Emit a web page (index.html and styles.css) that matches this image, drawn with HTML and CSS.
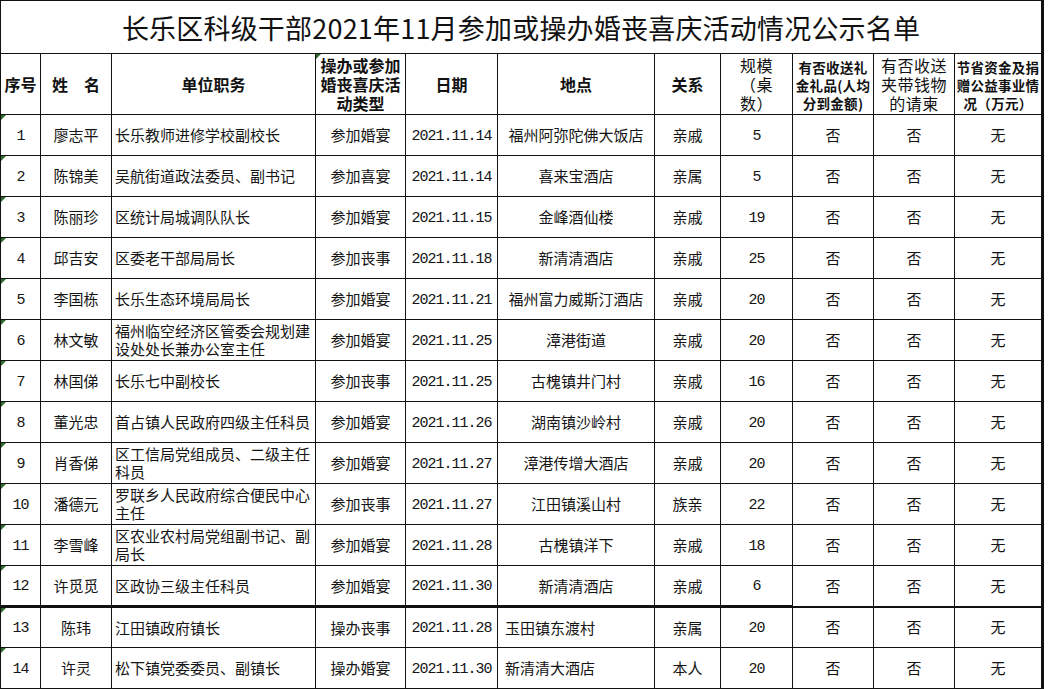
FILE: index.html
```html
<!DOCTYPE html>
<html lang="zh-CN">
<head>
<meta charset="utf-8">
<title>长乐区科级干部2021年11月参加或操办婚丧喜庆活动情况公示名单</title>
<link rel="stylesheet" href="styles.css">
</head>
<body>
<table class="sheet">
  <colgroup>
    <col class="c1"><col class="c2"><col class="c3"><col class="c4"><col class="c5"><col class="c6"><col class="c7"><col class="c8"><col class="c9"><col class="c10"><col class="c11">
  </colgroup>
  <tr class="title-row"><td colspan="11" class="title">长乐区科级干部2021年11月参加或操办婚丧喜庆活动情况公示名单</td></tr>
  <tr class="head-row">
    <th>序号</th>
    <th>姓　名</th>
    <th>单位职务</th>
    <th class="mark h3">操办或参加<br>婚丧喜庆活<br>动类型</th>
    <th>日期</th>
    <th>地点</th>
    <th>关系</th>
    <th class="thin h3">规模<br>（桌<br>数）</th>
    <th class="h3 small">有否收送礼<br>金礼品(人均<br>分到金额)</th>
    <th class="thin h3">有否收送<br>夹带钱物<br>的请柬</th>
    <th class="h3 small">节省资金及捐<br>赠公益事业情<br>况（万元）</th>
  </tr>
  <tr><td class="num mark">1</td><td>廖志平</td><td class="pos">长乐教师进修学校副校长</td><td>参加婚宴</td><td class="num">2021.11.14</td><td>福州阿弥陀佛大饭店</td><td>亲戚</td><td class="num">5</td><td>否</td><td>否</td><td>无</td></tr>
  <tr><td class="num mark">2</td><td>陈锦美</td><td class="pos">吴航街道政法委员、副书记</td><td>参加喜宴</td><td class="num">2021.11.14</td><td>喜来宝酒店</td><td>亲属</td><td class="num">5</td><td>否</td><td>否</td><td>无</td></tr>
  <tr><td class="num mark">3</td><td>陈丽珍</td><td class="pos">区统计局城调队队长</td><td>参加婚宴</td><td class="num">2021.11.15</td><td>金峰酒仙楼</td><td>亲戚</td><td class="num">19</td><td>否</td><td>否</td><td>无</td></tr>
  <tr><td class="num mark">4</td><td>邱吉安</td><td class="pos">区委老干部局局长</td><td>参加丧事</td><td class="num">2021.11.18</td><td>新清清酒店</td><td>亲戚</td><td class="num">25</td><td>否</td><td>否</td><td>无</td></tr>
  <tr><td class="num mark">5</td><td>李国栋</td><td class="pos">长乐生态环境局局长</td><td>参加婚宴</td><td class="num">2021.11.21</td><td>福州富力威斯汀酒店</td><td>亲戚</td><td class="num">20</td><td>否</td><td>否</td><td>无</td></tr>
  <tr><td class="num mark">6</td><td>林文敏</td><td class="pos">福州临空经济区管委会规划建设处处长兼办公室主任</td><td>参加婚宴</td><td class="num">2021.11.25</td><td>漳港街道</td><td>亲戚</td><td class="num">20</td><td>否</td><td>否</td><td>无</td></tr>
  <tr><td class="num mark">7</td><td>林国俤</td><td class="pos">长乐七中副校长</td><td>参加丧事</td><td class="num">2021.11.25</td><td>古槐镇井门村</td><td>亲戚</td><td class="num">16</td><td>否</td><td>否</td><td>无</td></tr>
  <tr><td class="num mark">8</td><td>董光忠</td><td class="pos">首占镇人民政府四级主任科员</td><td>参加婚宴</td><td class="num">2021.11.26</td><td>湖南镇沙岭村</td><td>亲戚</td><td class="num">20</td><td>否</td><td>否</td><td>无</td></tr>
  <tr><td class="num mark">9</td><td>肖香俤</td><td class="pos">区工信局党组成员、二级主任科员</td><td>参加婚宴</td><td class="num">2021.11.27</td><td>漳港传增大酒店</td><td>亲戚</td><td class="num">20</td><td>否</td><td>否</td><td>无</td></tr>
  <tr><td class="num mark">10</td><td>潘德元</td><td class="pos">罗联乡人民政府综合便民中心主任</td><td>参加丧事</td><td class="num">2021.11.27</td><td>江田镇溪山村</td><td>族亲</td><td class="num">22</td><td>否</td><td>否</td><td>无</td></tr>
  <tr><td class="num mark">11</td><td>李雪峰</td><td class="pos">区农业农村局党组副书记、副局长</td><td>参加婚宴</td><td class="num">2021.11.28</td><td>古槐镇洋下</td><td>亲戚</td><td class="num">18</td><td>否</td><td>否</td><td>无</td></tr>
  <tr><td class="num mark">12</td><td>许觅觅</td><td class="pos">区政协三级主任科员</td><td>参加婚宴</td><td class="num">2021.11.30</td><td>新清清酒店</td><td>亲戚</td><td class="num">6</td><td>否</td><td>否</td><td>无</td></tr>
  <tr class="split"><td class="num mark">13</td><td>陈玮</td><td class="pos">江田镇政府镇长</td><td>操办丧事</td><td class="num">2021.11.28</td><td class="left">玉田镇东渡村</td><td>亲属</td><td class="num">20</td><td>否</td><td>否</td><td>无</td></tr>
  <tr><td class="num mark">14</td><td>许灵</td><td class="pos">松下镇党委委员、副镇长</td><td>操办婚宴</td><td class="num">2021.11.30</td><td class="left">新清清大酒店</td><td>本人</td><td class="num">20</td><td>否</td><td>否</td><td>无</td></tr>
</table>
</body>
</html>
```

FILE: styles.css
```css
html, body {
  margin: 0;
  padding: 0;
  background: #ffffff;
}

body {
  font-family: "Noto Sans CJK SC", "Noto Sans", sans-serif;
  color: #141414;
}

.sheet {
  border-collapse: collapse;
  table-layout: fixed;
  width: 1042px;
}

.c1 { width: 40px; }
.c2 { width: 71px; }
.c3 { width: 204px; }
.c4 { width: 90px; }
.c5 { width: 92px; }
.c6 { width: 157px; }
.c7 { width: 66px; }
.c8 { width: 72px; }
.c9 { width: 81px; }
.c10 { width: 81px; }
.c11 { width: 88px; }

.sheet td,
.sheet th {
  border: 1px solid #111;
  padding: 0;
  text-align: center;
  vertical-align: middle;
  font-size: 15px;
  font-weight: 400;
  line-height: 18px;
  position: relative;
  white-space: nowrap;
}

.sheet tr > :last-child {
  border-right: 3px solid #111;
}

.sheet tr {
  height: 41px;
}

.sheet .title-row {
  height: 53px;
}

.sheet .title {
  font-size: 27px;
  line-height: 34px;
  letter-spacing: 0.2px;
  padding-top: 2px;
  color: #111;
}

.sheet .head-row {
  height: 61px;
}

.sheet th {
  font-weight: 700;
  font-size: 16px;
  line-height: 19px;
  color: #111;
}

.sheet th.h3 {
  line-height: 19px;
  padding-top: 1px;
}

.sheet th.thin {
  font-weight: 400;
  font-size: 16px;
  line-height: 19px;
  letter-spacing: 0.5px;
}

.sheet th.small {
  font-size: 13.5px;
  line-height: 18px;
  letter-spacing: 0.3px;
}

.sheet td.pos {
  text-align: left;
  padding-left: 3px;
  white-space: normal;
  line-height: 18px;
}

.sheet td.num {
  font-family: "Liberation Mono", "DejaVu Sans Mono", monospace;
  font-size: 15px;
  letter-spacing: -1px;
  padding-top: 3px;
}

.sheet td.left {
  text-align: left;
  padding-left: 7px;
}

.split td {
  border-top: 3px solid #111;
}

.split td:nth-child(n+9) {
  border-top-width: 2px;
}

.mark::before {
  content: "";
  position: absolute;
  left: 0;
  top: 0;
  width: 0;
  height: 0;
  border-top: 5px solid #2e6b2e;
  border-right: 5px solid transparent;
}
```
